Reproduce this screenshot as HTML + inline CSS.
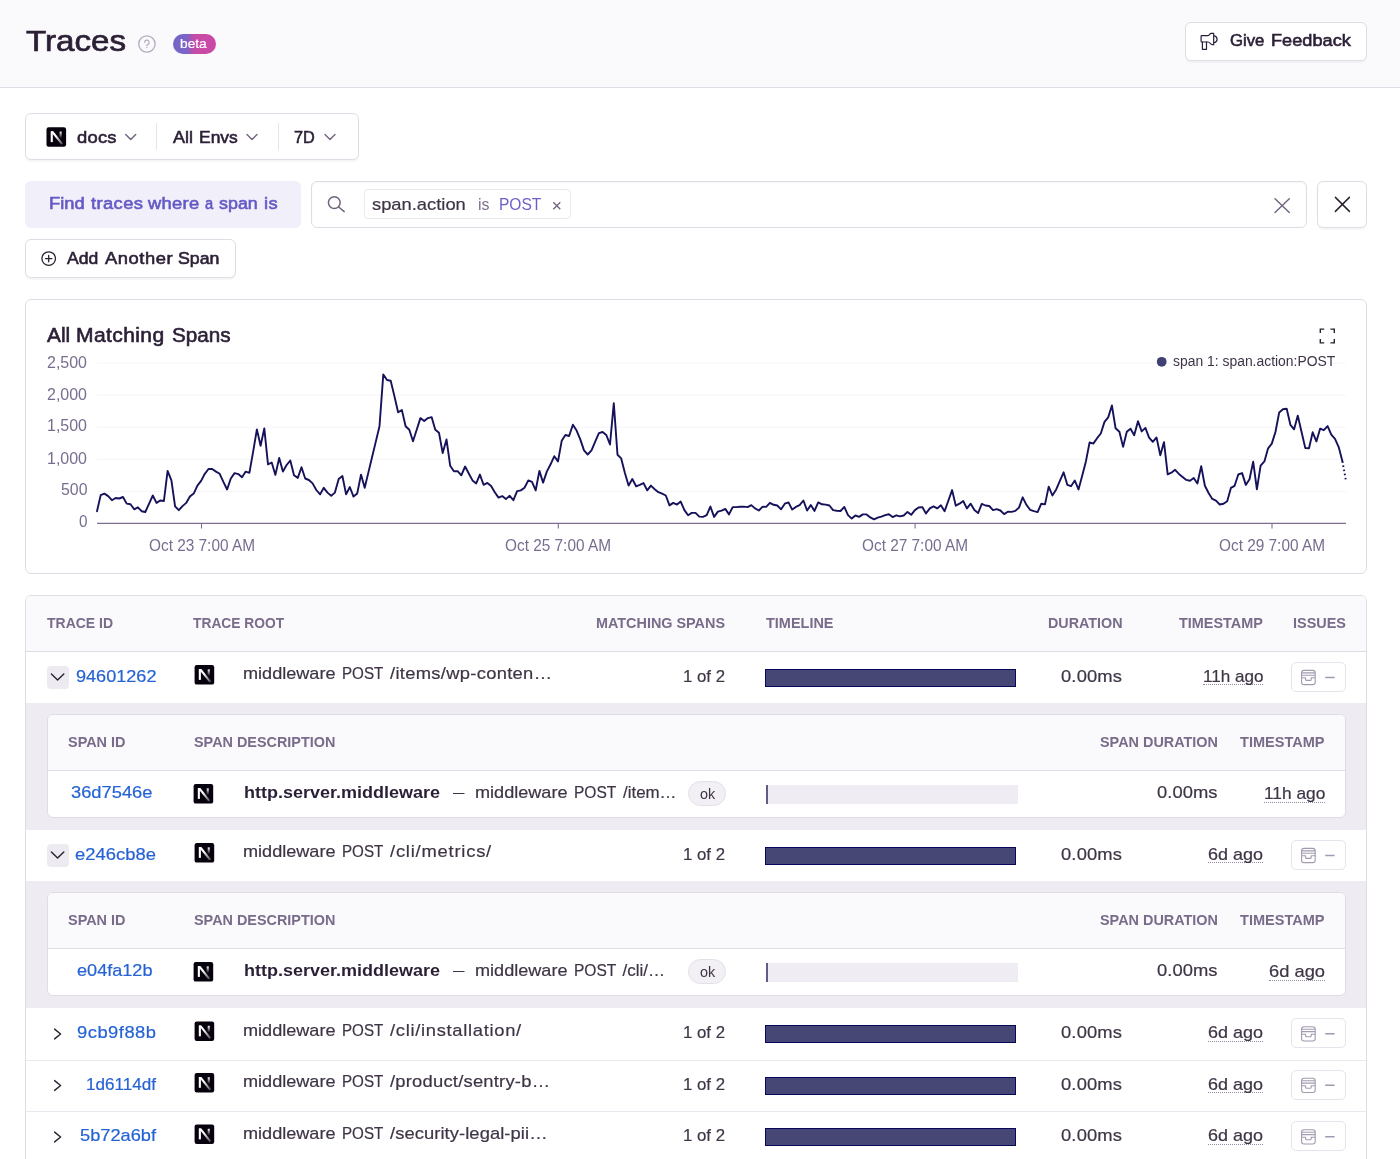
<!DOCTYPE html>
<html lang="en"><head><meta charset="utf-8"><title>Traces</title>
<style>
*{box-sizing:border-box;margin:0;padding:0}
html,body{width:1400px;height:1159px;overflow:hidden;background:#fff;font-family:"Liberation Sans",sans-serif;}
body{position:relative}
.abs{position:absolute}
#texts{position:absolute;left:0;top:0;width:1400px;height:1159px;will-change:transform}
.t{position:absolute;display:inline-block;transform-origin:0 50%;white-space:nowrap;line-height:1;font-family:"Liberation Sans",sans-serif}
.box{position:absolute;border:1px solid #e0dce5;border-radius:6px;background:#fff}
.btn{box-shadow:0 2px 0 rgba(43,34,51,0.04)}
.hdr{position:absolute;left:0;top:0;width:1400px;height:87.5px;background:#faf9fb;border-bottom:1px solid #e0dce5}
.beta{position:absolute;left:173px;top:33.5px;width:42.7px;height:20px;border-radius:10px;background:linear-gradient(90deg,#7565c8 0%,#7a64c7 30%,#c84ba6 52%,#c94aa6 100%)}
.find{position:absolute;left:25px;top:180.5px;width:276px;height:47.5px;border-radius:6px;background:#f0effa}
.divd{position:absolute;width:1px;background:#e7e3ec;top:123px;height:27px}
.token{position:absolute;left:364px;top:189px;width:207px;height:30px;border:1px solid #ece8f0;border-radius:4px;background:#fff}
.thead{position:absolute;background:#faf9fb;border-bottom:1px solid #e0dce5}
.exp{position:absolute;left:26px;width:1340px;background:#eeecf2}
.inner{position:absolute;left:47px;width:1299px;height:104px;border:1px solid #e0dce5;border-radius:6px;background:#fff;overflow:hidden}
.inner .ih{position:absolute;left:0;top:0;width:100%;height:56px;background:#faf9fb;border-bottom:1px solid #e0dce5}
.rowline{position:absolute;left:26px;width:1340px;height:1px;background:#ece8f0}
.chev{position:absolute;width:22px;height:22.5px;border-radius:4px;background:#edeaf1}
.bar{position:absolute;left:765px;width:251px;height:18px;background:#464775;border:1px solid #07075f}
.sbar{position:absolute;left:766px;width:251.5px;height:18.7px;background:#efecf3}
.sbar i{position:absolute;left:0;top:0;width:1.6px;height:100%;background:#625b8a}
.ok{position:absolute;left:687.5px;width:38.5px;height:25px;border-radius:12.5px;background:#f2eff5;border:1px solid #e4e0e9}
.iss{position:absolute;left:1291px;width:55px;height:30px;border:1px solid #e7e3ec;border-radius:5px;background:#fff}
.ul{position:absolute;height:0;border-top:1.2px dotted #968ca6}
svg.ov{position:absolute;left:0;top:0;width:1400px;height:1159px;overflow:visible}

</style></head>
<body>
<div class="hdr"></div>
<div class="beta"></div>
<div class="box btn" style="left:1184.5px;top:21.5px;width:182px;height:39.5px"></div>
<div class="box btn" style="left:25px;top:113px;width:334px;height:47px"></div>
<div class="divd" style="left:156px"></div><div class="divd" style="left:277.5px"></div>
<div class="find"></div>
<div class="box" style="left:311px;top:181px;width:996px;height:47px;box-shadow:inset 0 1px 2px rgba(43,34,51,0.04)"></div>
<div class="token"></div>
<div class="box btn" style="left:1317px;top:181px;width:50px;height:47px"></div>
<div class="box btn" style="left:25px;top:238.5px;width:210.5px;height:39.5px"></div>
<div class="box" style="left:25px;top:298.5px;width:1342px;height:275.5px"></div>
<!-- table -->
<div class="box" style="left:25px;top:594.5px;width:1342px;height:600px;border-radius:6px"></div>
<div class="thead" style="left:26px;top:595.5px;width:1340px;height:56.5px;border-radius:5px 5px 0 0"></div>
<div class="exp" style="top:702.5px;height:127.5px"></div>
<div class="inner" style="top:714px"><div class="ih"></div></div>
<div class="exp" style="top:880.5px;height:127.5px"></div>
<div class="inner" style="top:892px"><div class="ih"></div></div>
<div class="rowline" style="top:1059.5px"></div>
<div class="rowline" style="top:1110.7px"></div>
<div class="chev" style="left:47px;top:666px"></div>
<div class="chev" style="left:47px;top:844px"></div>
<div class="bar" style="top:669px"></div>
<div class="bar" style="top:847px"></div>
<div class="bar" style="top:1025.4px"></div>
<div class="bar" style="top:1077px"></div>
<div class="bar" style="top:1128.4px"></div>
<div class="sbar" style="top:785px"><i></i></div>
<div class="sbar" style="top:963px"><i></i></div>
<div class="ok" style="top:781px"></div>
<div class="ok" style="top:959px"></div>
<div class="iss" style="top:662px"></div>
<div class="iss" style="top:840px"></div>
<div class="iss" style="top:1018.4px"></div>
<div class="iss" style="top:1069.9px"></div>
<div class="iss" style="top:1121.4px"></div>
<div class="ul" style="left:1202.5px;width:60.5px;top:684px"></div>
<div class="ul" style="left:1208px;width:55px;top:862px"></div>
<div class="ul" style="left:1208px;width:55px;top:1040.5px"></div>
<div class="ul" style="left:1208px;width:55px;top:1092px"></div>
<div class="ul" style="left:1208px;width:55px;top:1143.5px"></div>
<div class="ul" style="left:1263.7px;width:61.3px;top:801.5px"></div>
<div class="ul" style="left:1269px;width:56px;top:979.5px"></div>
<svg class="ov" viewBox="0 0 1400 1159">
<defs>
<linearGradient id="ng" x1="0" y1="0" x2="0" y2="1"><stop offset="0" stop-color="#fff"/><stop offset="1" stop-color="#fff" stop-opacity="0"/></linearGradient>
<linearGradient id="ng2" gradientUnits="userSpaceOnUse" x1="9" y1="9" x2="16" y2="17.5"><stop offset="0" stop-color="#fff"/><stop offset="1" stop-color="#fff" stop-opacity="0.25"/></linearGradient>
</defs>
<!-- help icon -->
<circle cx="146.9" cy="44" r="8.2" fill="none" stroke="#b3abbf" stroke-width="1.3"/>
<path d="M144.7 42.3 a2.2 2.2 0 1 1 3.1 2 c-0.7 0.35 -0.9 0.8 -0.9 1.5" fill="none" stroke="#b3abbf" stroke-width="1.2" stroke-linecap="round"/><circle cx="146.9" cy="47.6" r="0.7" fill="#b3abbf"/>
<!-- megaphone -->
<g fill="none" stroke="#2b1d38" stroke-width="1.2" stroke-linejoin="round" stroke-linecap="round">
<path d="M1201.1 36.3 a0.7 0.7 0 0 1 0.7 -0.7 H1207.8 C1209.3 35.6 1209.6 33.4 1211.2 33.4 H1213.7 V44.7 H1212.6 C1210.8 44.7 1209.8 42 1208 42 H1201.8 a0.7 0.7 0 0 1 -0.7 -0.7 Z"/>
<path d="M1202.4 42 V49.3 H1206.5 V42"/>
<path d="M1214.4 35.9 A3.5 3.5 0 0 1 1214.4 42.7"/>
</g>
<!-- platform icon filter -->
<g transform="translate(46.5 127.2)"><rect x="0" y="0" width="19.6" height="19.6" rx="2.2" fill="#07010d"/>
<rect x="4.2" y="4.1" width="2.1" height="10.8" fill="#fff"/>
<path d="M4.2 4.1 L6.8 4.1 L16.5 16.3 L14.8 17.5 L5.8 6.2 Z" fill="url(#ng2)"/>
<rect x="13.1" y="4.4" width="2.1" height="6.6" fill="url(#ng)"/></g>
<g transform="translate(130.7 137)"><path d="M-5 -2.5 L0 2.5 L5 -2.5" fill="none" stroke="#71637e" stroke-width="1.4" stroke-linecap="round" stroke-linejoin="round"/></g><g transform="translate(252 137)"><path d="M-5 -2.5 L0 2.5 L5 -2.5" fill="none" stroke="#71637e" stroke-width="1.4" stroke-linecap="round" stroke-linejoin="round"/></g><g transform="translate(330 137)"><path d="M-5 -2.5 L0 2.5 L5 -2.5" fill="none" stroke="#71637e" stroke-width="1.4" stroke-linecap="round" stroke-linejoin="round"/></g>
<!-- magnifier -->
<g fill="none" stroke="#71637e" stroke-width="1.5" stroke-linecap="round"><circle cx="334.3" cy="202.6" r="5.9"/><path d="M338.7 207 L344.2 211.6"/></g>
<!-- token x -->
<path d="M553.3 202.2 L560.3 209.2 M560.3 202.2 L553.3 209.2" stroke="#71637e" stroke-width="1.3" fill="none"/>
<!-- clear x -->
<path d="M1275 198.8 L1289.3 212.6 M1289.3 198.8 L1275 212.6" stroke="#71637e" stroke-width="1.4" fill="none" stroke-linecap="round"/>
<path d="M1335.4 197.4 L1349.4 211.4 M1349.4 197.4 L1335.4 211.4" stroke="#2b2233" stroke-width="1.5" fill="none" stroke-linecap="round"/>
<!-- add icon -->
<g fill="none" stroke="#2b2233" stroke-width="1.3" stroke-linecap="round"><circle cx="48.7" cy="258.6" r="6.8"/><path d="M45.5 258.6 H51.9 M48.7 255.4 V261.8"/></g>
<!-- chart -->
<g stroke="#f6f4f9" stroke-width="1" fill="none">
<path d="M97 363 H1346 M97 395.1 H1346 M97 427.2 H1346 M97 459.3 H1346 M97 491.4 H1346"/></g>
<path d="M97 523.4 H1346 M201.5 523.4 V528.6 M558.3 523.4 V528.6 M915.1 523.4 V528.6 M1272 523.4 V528.6" stroke="#7d6f91" stroke-width="1.1" fill="none"/>
<path d="M97.0 511.2 L100.7 495.1 L104.4 493.6 L108.2 496.1 L111.9 500.2 L115.6 498.0 L119.3 498.5 L123.0 497.0 L126.7 503.6 L130.5 504.3 L134.2 509.3 L137.9 507.3 L141.6 511.2 L145.3 512.0 L149.0 503.9 L152.8 495.5 L156.5 502.9 L160.2 500.5 L163.9 501.0 L167.6 470.9 L171.4 480.4 L175.1 506.4 L178.8 510.2 L182.5 506.1 L186.2 502.9 L189.9 496.6 L193.7 493.6 L197.4 485.6 L201.1 480.9 L204.8 473.8 L208.5 469.0 L212.2 469.0 L216.0 471.6 L219.7 473.8 L223.4 481.9 L227.1 489.5 L230.8 478.5 L234.6 473.1 L238.3 474.1 L242.0 477.2 L245.7 471.6 L249.4 472.8 L253.1 451.8 L256.9 429.4 L260.6 445.7 L264.3 428.4 L268.0 464.3 L271.7 462.5 L275.4 474.9 L279.2 458.0 L282.9 471.6 L286.6 465.0 L290.3 460.6 L294.0 475.3 L297.8 477.9 L301.5 467.2 L305.2 478.5 L308.9 480.0 L312.6 483.4 L316.3 490.0 L320.1 494.4 L323.8 487.8 L327.5 492.6 L331.2 495.8 L334.9 492.6 L338.7 479.0 L342.4 476.0 L346.1 494.4 L349.8 487.0 L353.5 496.6 L357.2 493.6 L361.0 474.6 L364.7 487.8 L368.4 472.4 L372.1 457.0 L375.8 441.6 L379.5 426.2 L383.3 374.4 L387.0 380.0 L390.7 380.7 L394.4 396.1 L398.1 412.3 L401.9 410.1 L405.6 426.2 L409.3 429.8 L413.0 441.3 L416.7 429.8 L420.4 418.1 L424.2 421.0 L427.9 418.1 L431.6 417.1 L435.3 429.8 L439.0 432.8 L442.7 453.0 L446.5 439.4 L450.2 465.8 L453.9 471.2 L457.6 471.2 L461.3 475.3 L465.1 466.5 L468.8 473.5 L472.5 480.4 L476.2 483.4 L479.9 474.6 L483.6 484.8 L487.4 482.9 L491.1 485.9 L494.8 492.2 L498.5 497.6 L502.2 496.1 L505.9 499.1 L509.7 495.8 L513.4 500.2 L517.1 491.1 L520.8 490.4 L524.5 487.8 L528.3 480.4 L532.0 481.9 L535.7 490.3 L539.4 470.9 L543.1 482.6 L546.8 471.6 L550.6 464.3 L554.3 456.2 L558.0 461.4 L561.7 440.8 L565.4 435.0 L569.1 436.0 L572.9 424.7 L576.6 430.6 L580.3 439.4 L584.0 450.4 L587.7 454.5 L591.5 450.4 L595.2 441.6 L598.9 433.1 L602.6 432.0 L606.3 435.0 L610.0 444.5 L613.8 403.2 L617.5 454.8 L621.2 458.4 L624.9 473.1 L628.6 485.6 L632.3 479.0 L636.1 486.3 L639.8 484.8 L643.5 483.1 L647.2 490.3 L650.9 485.6 L654.7 489.2 L658.4 492.2 L662.1 493.6 L665.8 495.5 L669.5 505.4 L673.2 502.9 L677.0 504.6 L680.7 501.6 L684.4 510.1 L688.1 515.3 L691.8 512.9 L695.5 512.9 L699.3 516.6 L703.0 516.9 L706.7 515.1 L710.4 506.6 L714.1 516.9 L717.9 511.6 L721.6 510.6 L725.3 508.9 L729.0 514.4 L732.7 507.1 L736.4 507.1 L740.2 506.7 L743.9 506.6 L747.6 507.1 L751.3 505.1 L755.0 508.4 L758.8 510.5 L762.5 506.8 L766.2 506.9 L769.9 502.8 L773.6 504.8 L777.3 505.5 L781.1 509.3 L784.8 503.7 L788.5 502.4 L792.2 509.6 L795.9 506.9 L799.6 505.1 L803.4 500.5 L807.1 510.5 L810.8 505.1 L814.5 510.9 L818.2 502.4 L822.0 504.3 L825.7 504.6 L829.4 505.5 L833.1 510.1 L836.8 510.7 L840.5 511.0 L844.3 506.9 L848.0 515.1 L851.7 518.6 L855.4 515.5 L859.1 516.9 L862.8 514.4 L866.6 514.4 L870.3 517.4 L874.0 519.3 L877.7 517.6 L881.4 516.6 L885.2 515.1 L888.9 514.3 L892.6 517.1 L896.3 515.3 L900.0 516.4 L903.7 515.5 L907.5 511.9 L911.2 514.8 L914.9 510.1 L918.6 507.5 L922.3 507.1 L926.0 513.4 L929.8 508.4 L933.5 506.4 L937.2 508.4 L940.9 505.3 L944.6 511.2 L948.4 500.5 L952.1 490.1 L955.8 505.7 L959.5 503.7 L963.2 501.0 L966.9 508.4 L970.7 503.7 L974.4 510.1 L978.1 513.1 L981.8 503.9 L985.5 505.5 L989.2 506.0 L993.0 510.1 L996.7 509.1 L1000.4 510.5 L1004.1 514.1 L1007.8 511.8 L1011.6 511.9 L1015.3 510.9 L1019.0 507.6 L1022.7 497.3 L1026.4 504.8 L1030.1 509.8 L1033.9 511.2 L1037.6 512.1 L1041.3 503.7 L1045.0 504.4 L1048.7 486.6 L1052.4 495.5 L1056.2 489.4 L1059.9 480.9 L1063.6 472.3 L1067.3 484.8 L1071.0 486.2 L1074.8 480.5 L1078.5 489.4 L1082.2 475.7 L1085.9 461.4 L1089.6 442.4 L1093.3 443.6 L1097.1 438.2 L1100.8 433.5 L1104.5 421.9 L1108.2 417.4 L1111.9 405.5 L1115.6 428.3 L1119.4 431.7 L1123.1 446.9 L1126.8 431.7 L1130.5 428.7 L1134.2 435.2 L1138.0 421.2 L1141.7 431.4 L1145.4 427.9 L1149.1 437.6 L1152.8 441.8 L1156.5 437.4 L1160.3 455.2 L1164.0 442.1 L1167.7 474.3 L1171.4 472.7 L1175.1 469.8 L1178.9 473.9 L1182.6 476.9 L1186.3 479.9 L1190.0 480.7 L1193.7 477.9 L1197.4 483.5 L1201.2 466.2 L1204.9 485.8 L1208.6 493.0 L1212.3 498.9 L1216.0 500.7 L1219.7 504.5 L1223.5 503.7 L1227.2 501.3 L1230.9 487.9 L1234.6 485.8 L1238.3 474.5 L1242.1 473.1 L1245.8 484.9 L1249.5 479.3 L1253.2 461.8 L1256.9 489.4 L1260.6 465.6 L1264.4 461.4 L1268.1 448.3 L1271.8 443.6 L1275.5 431.7 L1279.2 412.4 L1282.9 409.3 L1286.7 408.8 L1290.4 424.8 L1294.1 429.3 L1297.8 415.6 L1301.5 431.7 L1305.3 448.1 L1309.0 448.3 L1312.7 432.3 L1316.4 441.4 L1320.1 428.7 L1323.8 430.2 L1327.6 426.1 L1331.3 434.6 L1335.0 438.8 L1338.7 447.1 L1342.4 461.3" fill="none" stroke="#15125a" stroke-width="1.9" stroke-linejoin="round" stroke-linecap="round"/>
<path d="M1342.4 461.3 L1346.1 481.5" fill="none" stroke="#15125a" stroke-width="1.9" stroke-dasharray="1.6 2.6"/>
<circle cx="1161.7" cy="361.8" r="4.9" fill="#3f4074"/>
<path d="M1320.3 333 V329.1 H1324.2 M1330.4 329.1 H1334.3 V333 M1334.3 339 V342.9 H1330.4 M1324.2 342.9 H1320.3 V339" fill="none" stroke="#2b2233" stroke-width="1.4"/>
<!-- table icons -->
<g transform="translate(57.6 677)"><path d="M-6.2 -3.1 L0 3.1 L6.2 -3.1" fill="none" stroke="#2b2233" stroke-width="1.4" stroke-linecap="round" stroke-linejoin="round"/></g><g transform="translate(57.6 855)"><path d="M-6.2 -3.1 L0 3.1 L6.2 -3.1" fill="none" stroke="#2b2233" stroke-width="1.4" stroke-linecap="round" stroke-linejoin="round"/></g>
<g transform="translate(57.6 1034)"><path d="M-3 -4.9 L3 0 L-3 4.9" fill="none" stroke="#2b2233" stroke-width="1.4" stroke-linecap="round" stroke-linejoin="round"/></g><g transform="translate(57.6 1085.5)"><path d="M-3 -4.9 L3 0 L-3 4.9" fill="none" stroke="#2b2233" stroke-width="1.4" stroke-linecap="round" stroke-linejoin="round"/></g><g transform="translate(57.6 1137)"><path d="M-3 -4.9 L3 0 L-3 4.9" fill="none" stroke="#2b2233" stroke-width="1.4" stroke-linecap="round" stroke-linejoin="round"/></g>
<g transform="translate(194.6 665)"><rect x="0" y="0" width="19.6" height="19.6" rx="2.2" fill="#07010d"/>
<rect x="4.2" y="4.1" width="2.1" height="10.8" fill="#fff"/>
<path d="M4.2 4.1 L6.8 4.1 L16.5 16.3 L14.8 17.5 L5.8 6.2 Z" fill="url(#ng2)"/>
<rect x="13.1" y="4.4" width="2.1" height="6.6" fill="url(#ng)"/></g><g transform="translate(194.6 843)"><rect x="0" y="0" width="19.6" height="19.6" rx="2.2" fill="#07010d"/>
<rect x="4.2" y="4.1" width="2.1" height="10.8" fill="#fff"/>
<path d="M4.2 4.1 L6.8 4.1 L16.5 16.3 L14.8 17.5 L5.8 6.2 Z" fill="url(#ng2)"/>
<rect x="13.1" y="4.4" width="2.1" height="6.6" fill="url(#ng)"/></g><g transform="translate(194.6 1021.4)"><rect x="0" y="0" width="19.6" height="19.6" rx="2.2" fill="#07010d"/>
<rect x="4.2" y="4.1" width="2.1" height="10.8" fill="#fff"/>
<path d="M4.2 4.1 L6.8 4.1 L16.5 16.3 L14.8 17.5 L5.8 6.2 Z" fill="url(#ng2)"/>
<rect x="13.1" y="4.4" width="2.1" height="6.6" fill="url(#ng)"/></g><g transform="translate(194.6 1072.9)"><rect x="0" y="0" width="19.6" height="19.6" rx="2.2" fill="#07010d"/>
<rect x="4.2" y="4.1" width="2.1" height="10.8" fill="#fff"/>
<path d="M4.2 4.1 L6.8 4.1 L16.5 16.3 L14.8 17.5 L5.8 6.2 Z" fill="url(#ng2)"/>
<rect x="13.1" y="4.4" width="2.1" height="6.6" fill="url(#ng)"/></g><g transform="translate(194.6 1124.4)"><rect x="0" y="0" width="19.6" height="19.6" rx="2.2" fill="#07010d"/>
<rect x="4.2" y="4.1" width="2.1" height="10.8" fill="#fff"/>
<path d="M4.2 4.1 L6.8 4.1 L16.5 16.3 L14.8 17.5 L5.8 6.2 Z" fill="url(#ng2)"/>
<rect x="13.1" y="4.4" width="2.1" height="6.6" fill="url(#ng)"/></g>
<g transform="translate(193.6 784)"><rect x="0" y="0" width="19.6" height="19.6" rx="2.2" fill="#07010d"/>
<rect x="4.2" y="4.1" width="2.1" height="10.8" fill="#fff"/>
<path d="M4.2 4.1 L6.8 4.1 L16.5 16.3 L14.8 17.5 L5.8 6.2 Z" fill="url(#ng2)"/>
<rect x="13.1" y="4.4" width="2.1" height="6.6" fill="url(#ng)"/></g><g transform="translate(193.6 962)"><rect x="0" y="0" width="19.6" height="19.6" rx="2.2" fill="#07010d"/>
<rect x="4.2" y="4.1" width="2.1" height="10.8" fill="#fff"/>
<path d="M4.2 4.1 L6.8 4.1 L16.5 16.3 L14.8 17.5 L5.8 6.2 Z" fill="url(#ng2)"/>
<rect x="13.1" y="4.4" width="2.1" height="6.6" fill="url(#ng)"/></g>
<g transform="translate(1301 670)" fill="none" stroke="#a29ab0" stroke-width="1.1" stroke-linejoin="round"><rect x="0.6" y="0.4" width="13.6" height="14.2" rx="2.4"/><path d="M0.6 2.9 H14.2 M0.6 5.2 H14.2 M0.6 7.8 H4.6 V9.4 a1 1 0 0 0 1 1 H9.2 a1 1 0 0 0 1 -1 V7.8 H14.2"/></g><g transform="translate(1301 848)" fill="none" stroke="#a29ab0" stroke-width="1.1" stroke-linejoin="round"><rect x="0.6" y="0.4" width="13.6" height="14.2" rx="2.4"/><path d="M0.6 2.9 H14.2 M0.6 5.2 H14.2 M0.6 7.8 H4.6 V9.4 a1 1 0 0 0 1 1 H9.2 a1 1 0 0 0 1 -1 V7.8 H14.2"/></g><g transform="translate(1301 1026.4)" fill="none" stroke="#a29ab0" stroke-width="1.1" stroke-linejoin="round"><rect x="0.6" y="0.4" width="13.6" height="14.2" rx="2.4"/><path d="M0.6 2.9 H14.2 M0.6 5.2 H14.2 M0.6 7.8 H4.6 V9.4 a1 1 0 0 0 1 1 H9.2 a1 1 0 0 0 1 -1 V7.8 H14.2"/></g><g transform="translate(1301 1077.9)" fill="none" stroke="#a29ab0" stroke-width="1.1" stroke-linejoin="round"><rect x="0.6" y="0.4" width="13.6" height="14.2" rx="2.4"/><path d="M0.6 2.9 H14.2 M0.6 5.2 H14.2 M0.6 7.8 H4.6 V9.4 a1 1 0 0 0 1 1 H9.2 a1 1 0 0 0 1 -1 V7.8 H14.2"/></g><g transform="translate(1301 1129.4)" fill="none" stroke="#a29ab0" stroke-width="1.1" stroke-linejoin="round"><rect x="0.6" y="0.4" width="13.6" height="14.2" rx="2.4"/><path d="M0.6 2.9 H14.2 M0.6 5.2 H14.2 M0.6 7.8 H4.6 V9.4 a1 1 0 0 0 1 1 H9.2 a1 1 0 0 0 1 -1 V7.8 H14.2"/></g>
<path d="M1325.2 677.4 H1334.6 M1325.2 855.4 H1334.6 M1325.2 1033.8 H1334.6 M1325.2 1085.3 H1334.6 M1325.2 1136.8 H1334.6" stroke="#a29ab0" stroke-width="1.5" fill="none"/>
</svg>

<div id="texts">
<span class="t" id="t0" style="left:26.20px;top:26.40px;font-size:30px;font-weight:400;color:#2b1f36;letter-spacing:0.000px;transform:scaleX(1.1051);-webkit-text-stroke:0.7px #2b1f36;">Traces</span>
<span class="t" id="t1" style="left:180.40px;top:36.50px;font-size:13px;font-weight:400;color:#fff;letter-spacing:0.000px;transform:scaleX(1.0548);-webkit-text-stroke:0.2px #fff;">beta</span>
<span class="t" id="t2" style="left:1229.50px;top:33.08px;font-size:16.8px;font-weight:400;color:#2b1f36;letter-spacing:0.000px;transform:scaleX(0.9967);-webkit-text-stroke:0.6px #2b1f36;">Give</span>
<span class="t" id="t3" style="left:1270.50px;top:33.08px;font-size:16.8px;font-weight:400;color:#2b1f36;letter-spacing:0.040px;transform:scaleX(1.0800);-webkit-text-stroke:0.6px #2b1f36;">Feedback</span>
<span class="t" id="t4" style="left:77.00px;top:128.61px;font-size:17px;font-weight:400;color:#2b1f36;letter-spacing:0.217px;transform:scaleX(1.0800);-webkit-text-stroke:0.6px #2b1f36;">docs</span>
<span class="t" id="t5" style="left:172.50px;top:128.61px;font-size:17px;font-weight:400;color:#2b1f36;letter-spacing:0.000px;transform:scaleX(1.0579);-webkit-text-stroke:0.6px #2b1f36;">All</span>
<span class="t" id="t6" style="left:199.20px;top:128.61px;font-size:17px;font-weight:400;color:#2b1f36;letter-spacing:0.000px;transform:scaleX(1.0265);-webkit-text-stroke:0.6px #2b1f36;">Envs</span>
<span class="t" id="t7" style="left:293.70px;top:128.61px;font-size:17px;font-weight:400;color:#2b1f36;letter-spacing:0.000px;transform:scaleX(0.9570);-webkit-text-stroke:0.6px #2b1f36;">7D</span>
<span class="t" id="t8" style="left:48.70px;top:195.11px;font-size:17px;font-weight:400;color:#6559c5;letter-spacing:0.023px;transform:scaleX(1.0800);-webkit-text-stroke:0.6px #6559c5;">Find</span>
<span class="t" id="t9" style="left:90.50px;top:195.11px;font-size:17px;font-weight:400;color:#6559c5;letter-spacing:0.370px;transform:scaleX(1.0800);-webkit-text-stroke:0.6px #6559c5;">traces</span>
<span class="t" id="t10" style="left:148.00px;top:195.11px;font-size:17px;font-weight:400;color:#6559c5;letter-spacing:0.274px;transform:scaleX(1.0800);-webkit-text-stroke:0.6px #6559c5;">where</span>
<span class="t" id="t11" style="left:205.00px;top:195.11px;font-size:17px;font-weight:400;color:#6559c5;letter-spacing:0.000px;transform:scaleX(0.8660);-webkit-text-stroke:0.6px #6559c5;">a</span>
<span class="t" id="t12" style="left:218.70px;top:195.11px;font-size:17px;font-weight:400;color:#6559c5;letter-spacing:0.000px;transform:scaleX(1.0522);-webkit-text-stroke:0.6px #6559c5;">span</span>
<span class="t" id="t13" style="left:263.70px;top:195.11px;font-size:17px;font-weight:400;color:#6559c5;letter-spacing:0.497px;transform:scaleX(1.0800);-webkit-text-stroke:0.6px #6559c5;">is</span>
<span class="t" id="t14" style="left:371.70px;top:195.61px;font-size:17px;font-weight:400;color:#3e3446;letter-spacing:0.000px;transform:scaleX(1.0787);-webkit-text-stroke:0.2px #3e3446;">span.action</span>
<span class="t" id="t15" style="left:477.50px;top:195.61px;font-size:17px;font-weight:400;color:#80708f;letter-spacing:0.000px;transform:scaleX(0.9364);">is</span>
<span class="t" id="t16" style="left:498.70px;top:195.61px;font-size:17px;font-weight:400;color:#6c5fc7;letter-spacing:0.000px;transform:scaleX(0.9137);">POST</span>
<span class="t" id="t17" style="left:67.00px;top:250.11px;font-size:17px;font-weight:400;color:#2b1f36;letter-spacing:-0.000px;transform:scaleX(1.0314);-webkit-text-stroke:0.6px #2b1f36;">Add</span>
<span class="t" id="t18" style="left:104.50px;top:250.11px;font-size:17px;font-weight:400;color:#2b1f36;letter-spacing:0.492px;transform:scaleX(1.0800);-webkit-text-stroke:0.6px #2b1f36;">Another</span>
<span class="t" id="t19" style="left:178.00px;top:250.11px;font-size:17px;font-weight:400;color:#2b1f36;letter-spacing:0.000px;transform:scaleX(1.0453);-webkit-text-stroke:0.6px #2b1f36;">Span</span>
<span class="t" id="t20" style="left:46.80px;top:325.79px;font-size:19.5px;font-weight:400;color:#2b1f36;letter-spacing:0.000px;transform:scaleX(1.0705);-webkit-text-stroke:0.6px #2b1f36;">All</span>
<span class="t" id="t21" style="left:76.20px;top:325.79px;font-size:19.5px;font-weight:400;color:#2b1f36;letter-spacing:0.350px;transform:scaleX(1.0800);-webkit-text-stroke:0.6px #2b1f36;">Matching</span>
<span class="t" id="t22" style="left:171.80px;top:325.79px;font-size:19.5px;font-weight:400;color:#2b1f36;letter-spacing:-0.000px;transform:scaleX(1.0597);-webkit-text-stroke:0.6px #2b1f36;">Spans</span>
<span class="t" id="t23" style="left:47.00px;top:354.59px;font-size:15.6px;font-weight:400;color:#786d8f;letter-spacing:0.000px;transform:scaleX(1.0248);">2,500</span>
<span class="t" id="t24" style="left:47.00px;top:386.69px;font-size:15.6px;font-weight:400;color:#786d8f;letter-spacing:0.000px;transform:scaleX(1.0248);">2,000</span>
<span class="t" id="t25" style="left:47.00px;top:418.49px;font-size:15.6px;font-weight:400;color:#786d8f;letter-spacing:0.000px;transform:scaleX(1.0248);">1,500</span>
<span class="t" id="t26" style="left:47.00px;top:450.69px;font-size:15.6px;font-weight:400;color:#786d8f;letter-spacing:0.000px;transform:scaleX(1.0248);">1,000</span>
<span class="t" id="t27" style="left:60.50px;top:482.09px;font-size:15.6px;font-weight:400;color:#786d8f;letter-spacing:0.000px;transform:scaleX(1.0180);">500</span>
<span class="t" id="t28" style="left:78.50px;top:513.89px;font-size:15.6px;font-weight:400;color:#786d8f;letter-spacing:0.000px;transform:scaleX(0.9784);">0</span>
<span class="t" id="t29" style="left:148.50px;top:536.72px;font-size:16.4px;font-weight:400;color:#786d8f;letter-spacing:0.000px;transform:scaleX(0.9382);">Oct 23 7:00 AM</span>
<span class="t" id="t30" style="left:505.30px;top:536.72px;font-size:16.4px;font-weight:400;color:#786d8f;letter-spacing:0.000px;transform:scaleX(0.9382);">Oct 25 7:00 AM</span>
<span class="t" id="t31" style="left:862.10px;top:536.72px;font-size:16.4px;font-weight:400;color:#786d8f;letter-spacing:0.000px;transform:scaleX(0.9382);">Oct 27 7:00 AM</span>
<span class="t" id="t32" style="left:1219.00px;top:536.72px;font-size:16.4px;font-weight:400;color:#786d8f;letter-spacing:0.000px;transform:scaleX(0.9382);">Oct 29 7:00 AM</span>
<span class="t" id="t33" style="left:1173.40px;top:354.62px;font-size:13.8px;font-weight:400;color:#3e3446;letter-spacing:0.000px;transform:scaleX(1.0077);">span 1: span.action:POST</span>
<span class="t" id="t34" style="left:47.00px;top:614.58px;font-size:15.5px;font-weight:700;color:#796b8a;letter-spacing:0.000px;transform:scaleX(0.9016);">TRACE ID</span>
<span class="t" id="t35" style="left:192.50px;top:614.58px;font-size:15.5px;font-weight:700;color:#796b8a;letter-spacing:0.000px;transform:scaleX(0.8900);">TRACE ROOT</span>
<span class="t" id="t36" style="left:595.50px;top:614.58px;font-size:15.5px;font-weight:700;color:#796b8a;letter-spacing:0.000px;transform:scaleX(0.9285);">MATCHING SPANS</span>
<span class="t" id="t37" style="left:765.50px;top:614.58px;font-size:15.5px;font-weight:700;color:#796b8a;letter-spacing:0.000px;transform:scaleX(0.9330);">TIMELINE</span>
<span class="t" id="t38" style="left:1047.50px;top:614.58px;font-size:15.5px;font-weight:700;color:#796b8a;letter-spacing:0.000px;transform:scaleX(0.9237);">DURATION</span>
<span class="t" id="t39" style="left:1178.70px;top:614.58px;font-size:15.5px;font-weight:700;color:#796b8a;letter-spacing:0.000px;transform:scaleX(0.9298);">TIMESTAMP</span>
<span class="t" id="t40" style="left:1292.50px;top:614.58px;font-size:15.5px;font-weight:700;color:#796b8a;letter-spacing:0.000px;transform:scaleX(0.9321);">ISSUES</span>
<span class="t" id="t41" style="left:75.50px;top:667.61px;font-size:17px;font-weight:400;color:#2562d4;letter-spacing:0.000px;transform:scaleX(1.0642);-webkit-text-stroke:0.2px #2562d4;">94601262</span>
<span class="t" id="t42" style="left:242.50px;top:665.11px;font-size:17px;font-weight:400;color:#3e3446;letter-spacing:0.000px;transform:scaleX(1.0640);-webkit-text-stroke:0.2px #3e3446;">middleware</span>
<span class="t" id="t43" style="left:341.70px;top:665.11px;font-size:17px;font-weight:400;color:#3e3446;letter-spacing:0.000px;transform:scaleX(0.8921);-webkit-text-stroke:0.2px #3e3446;">POST</span>
<span class="t" id="t44" style="left:390.00px;top:665.11px;font-size:17px;font-weight:400;color:#3e3446;letter-spacing:0.281px;transform:scaleX(1.0800);-webkit-text-stroke:0.2px #3e3446;">/items/wp-conten…</span>
<span class="t" id="t45" style="left:682.50px;top:667.61px;font-size:17px;font-weight:400;color:#3e3446;letter-spacing:0.000px;transform:scaleX(0.9871);-webkit-text-stroke:0.2px #3e3446;">1 of 2</span>
<span class="t" id="t46" style="left:1061.00px;top:667.61px;font-size:17px;font-weight:400;color:#3e3446;letter-spacing:0.146px;transform:scaleX(1.0800);-webkit-text-stroke:0.2px #3e3446;">0.00ms</span>
<span class="t" id="t47" style="left:1202.50px;top:667.61px;font-size:17px;font-weight:400;color:#3e3446;letter-spacing:0.000px;transform:scaleX(1.0049);-webkit-text-stroke:0.2px #3e3446;">11h ago</span>
<span class="t" id="t48" style="left:75.00px;top:845.61px;font-size:17px;font-weight:400;color:#2562d4;letter-spacing:0.045px;transform:scaleX(1.0800);-webkit-text-stroke:0.2px #2562d4;">e246cb8e</span>
<span class="t" id="t49" style="left:242.50px;top:843.11px;font-size:17px;font-weight:400;color:#3e3446;letter-spacing:0.000px;transform:scaleX(1.0640);-webkit-text-stroke:0.2px #3e3446;">middleware</span>
<span class="t" id="t50" style="left:341.70px;top:843.11px;font-size:17px;font-weight:400;color:#3e3446;letter-spacing:0.000px;transform:scaleX(0.8921);-webkit-text-stroke:0.2px #3e3446;">POST</span>
<span class="t" id="t51" style="left:390.00px;top:843.11px;font-size:17px;font-weight:400;color:#3e3446;letter-spacing:0.725px;transform:scaleX(1.0800);-webkit-text-stroke:0.2px #3e3446;">/cli/metrics/</span>
<span class="t" id="t52" style="left:682.50px;top:845.61px;font-size:17px;font-weight:400;color:#3e3446;letter-spacing:0.000px;transform:scaleX(0.9871);-webkit-text-stroke:0.2px #3e3446;">1 of 2</span>
<span class="t" id="t53" style="left:1061.00px;top:845.61px;font-size:17px;font-weight:400;color:#3e3446;letter-spacing:0.146px;transform:scaleX(1.0800);-webkit-text-stroke:0.2px #3e3446;">0.00ms</span>
<span class="t" id="t54" style="left:1208.00px;top:845.61px;font-size:17px;font-weight:400;color:#3e3446;letter-spacing:0.000px;transform:scaleX(1.0577);-webkit-text-stroke:0.2px #3e3446;">6d ago</span>
<span class="t" id="t55" style="left:77.00px;top:1024.11px;font-size:17px;font-weight:400;color:#2562d4;letter-spacing:0.456px;transform:scaleX(1.0800);-webkit-text-stroke:0.2px #2562d4;">9cb9f88b</span>
<span class="t" id="t56" style="left:242.50px;top:1021.61px;font-size:17px;font-weight:400;color:#3e3446;letter-spacing:0.000px;transform:scaleX(1.0640);-webkit-text-stroke:0.2px #3e3446;">middleware</span>
<span class="t" id="t57" style="left:341.70px;top:1021.61px;font-size:17px;font-weight:400;color:#3e3446;letter-spacing:0.000px;transform:scaleX(0.8921);-webkit-text-stroke:0.2px #3e3446;">POST</span>
<span class="t" id="t58" style="left:390.00px;top:1021.61px;font-size:17px;font-weight:400;color:#3e3446;letter-spacing:0.642px;transform:scaleX(1.0800);-webkit-text-stroke:0.2px #3e3446;">/cli/installation/</span>
<span class="t" id="t59" style="left:682.50px;top:1024.11px;font-size:17px;font-weight:400;color:#3e3446;letter-spacing:0.000px;transform:scaleX(0.9871);-webkit-text-stroke:0.2px #3e3446;">1 of 2</span>
<span class="t" id="t60" style="left:1061.00px;top:1024.11px;font-size:17px;font-weight:400;color:#3e3446;letter-spacing:0.146px;transform:scaleX(1.0800);-webkit-text-stroke:0.2px #3e3446;">0.00ms</span>
<span class="t" id="t61" style="left:1208.00px;top:1024.11px;font-size:17px;font-weight:400;color:#3e3446;letter-spacing:0.000px;transform:scaleX(1.0577);-webkit-text-stroke:0.2px #3e3446;">6d ago</span>
<span class="t" id="t62" style="left:86.00px;top:1075.61px;font-size:17px;font-weight:400;color:#2562d4;letter-spacing:0.000px;transform:scaleX(1.0049);-webkit-text-stroke:0.2px #2562d4;">1d6114df</span>
<span class="t" id="t63" style="left:242.50px;top:1073.11px;font-size:17px;font-weight:400;color:#3e3446;letter-spacing:0.000px;transform:scaleX(1.0640);-webkit-text-stroke:0.2px #3e3446;">middleware</span>
<span class="t" id="t64" style="left:341.70px;top:1073.11px;font-size:17px;font-weight:400;color:#3e3446;letter-spacing:0.000px;transform:scaleX(0.8921);-webkit-text-stroke:0.2px #3e3446;">POST</span>
<span class="t" id="t65" style="left:390.00px;top:1073.11px;font-size:17px;font-weight:400;color:#3e3446;letter-spacing:0.211px;transform:scaleX(1.0800);-webkit-text-stroke:0.2px #3e3446;">/product/sentry-b…</span>
<span class="t" id="t66" style="left:682.50px;top:1075.61px;font-size:17px;font-weight:400;color:#3e3446;letter-spacing:0.000px;transform:scaleX(0.9871);-webkit-text-stroke:0.2px #3e3446;">1 of 2</span>
<span class="t" id="t67" style="left:1061.00px;top:1075.61px;font-size:17px;font-weight:400;color:#3e3446;letter-spacing:0.146px;transform:scaleX(1.0800);-webkit-text-stroke:0.2px #3e3446;">0.00ms</span>
<span class="t" id="t68" style="left:1208.00px;top:1075.61px;font-size:17px;font-weight:400;color:#3e3446;letter-spacing:0.000px;transform:scaleX(1.0577);-webkit-text-stroke:0.2px #3e3446;">6d ago</span>
<span class="t" id="t69" style="left:80.00px;top:1127.11px;font-size:17px;font-weight:400;color:#2562d4;letter-spacing:0.000px;transform:scaleX(1.0718);-webkit-text-stroke:0.2px #2562d4;">5b72a6bf</span>
<span class="t" id="t70" style="left:242.50px;top:1124.61px;font-size:17px;font-weight:400;color:#3e3446;letter-spacing:0.000px;transform:scaleX(1.0640);-webkit-text-stroke:0.2px #3e3446;">middleware</span>
<span class="t" id="t71" style="left:341.70px;top:1124.61px;font-size:17px;font-weight:400;color:#3e3446;letter-spacing:0.000px;transform:scaleX(0.8921);-webkit-text-stroke:0.2px #3e3446;">POST</span>
<span class="t" id="t72" style="left:390.00px;top:1124.61px;font-size:17px;font-weight:400;color:#3e3446;letter-spacing:0.068px;transform:scaleX(1.0800);-webkit-text-stroke:0.2px #3e3446;">/security-legal-pii…</span>
<span class="t" id="t73" style="left:682.50px;top:1127.11px;font-size:17px;font-weight:400;color:#3e3446;letter-spacing:0.000px;transform:scaleX(0.9871);-webkit-text-stroke:0.2px #3e3446;">1 of 2</span>
<span class="t" id="t74" style="left:1061.00px;top:1127.11px;font-size:17px;font-weight:400;color:#3e3446;letter-spacing:0.146px;transform:scaleX(1.0800);-webkit-text-stroke:0.2px #3e3446;">0.00ms</span>
<span class="t" id="t75" style="left:1208.00px;top:1127.11px;font-size:17px;font-weight:400;color:#3e3446;letter-spacing:0.000px;transform:scaleX(1.0577);-webkit-text-stroke:0.2px #3e3446;">6d ago</span>
<span class="t" id="t76" style="left:68.00px;top:734.38px;font-size:15.5px;font-weight:700;color:#796b8a;letter-spacing:0.000px;transform:scaleX(0.9314);">SPAN ID</span>
<span class="t" id="t77" style="left:193.70px;top:734.38px;font-size:15.5px;font-weight:700;color:#796b8a;letter-spacing:0.000px;transform:scaleX(0.9287);">SPAN DESCRIPTION</span>
<span class="t" id="t78" style="left:1099.50px;top:734.38px;font-size:15.5px;font-weight:700;color:#796b8a;letter-spacing:0.000px;transform:scaleX(0.9300);">SPAN DURATION</span>
<span class="t" id="t79" style="left:1240.00px;top:734.38px;font-size:15.5px;font-weight:700;color:#796b8a;letter-spacing:0.000px;transform:scaleX(0.9376);">TIMESTAMP</span>
<span class="t" id="t80" style="left:71.00px;top:784.31px;font-size:17px;font-weight:400;color:#2562d4;letter-spacing:0.000px;transform:scaleX(1.0775);-webkit-text-stroke:0.2px #2562d4;">36d7546e</span>
<span class="t" id="t81" style="left:244.00px;top:784.31px;font-size:17px;font-weight:700;color:#2b1f36;letter-spacing:0.000px;transform:scaleX(1.0584);">http.server.middleware</span>
<span class="t" id="t82" style="left:453.00px;top:784.85px;font-size:14px;font-weight:400;color:#3e3446;letter-spacing:0.000px;transform:scaleX(0.8214);">—</span>
<span class="t" id="t83" style="left:475.00px;top:784.31px;font-size:17px;font-weight:400;color:#3e3446;letter-spacing:0.000px;transform:scaleX(1.0640);-webkit-text-stroke:0.2px #3e3446;">middleware</span>
<span class="t" id="t84" style="left:573.70px;top:784.31px;font-size:17px;font-weight:400;color:#3e3446;letter-spacing:0.000px;transform:scaleX(0.9137);-webkit-text-stroke:0.2px #3e3446;">POST</span>
<span class="t" id="t85" style="left:622.50px;top:784.31px;font-size:17px;font-weight:400;color:#3e3446;letter-spacing:0.000px;transform:scaleX(0.9936);-webkit-text-stroke:0.2px #3e3446;">/item…</span>
<span class="t" id="t86" style="left:699.80px;top:787.35px;font-size:14px;font-weight:400;color:#3e3446;letter-spacing:0.000px;transform:scaleX(1.0272);">ok</span>
<span class="t" id="t87" style="left:1157.00px;top:784.31px;font-size:17px;font-weight:400;color:#3e3446;letter-spacing:0.054px;transform:scaleX(1.0800);-webkit-text-stroke:0.2px #3e3446;">0.00ms</span>
<span class="t" id="t88" style="left:1263.70px;top:785.31px;font-size:17px;font-weight:400;color:#3e3446;letter-spacing:-0.000px;transform:scaleX(1.0182);-webkit-text-stroke:0.2px #3e3446;">11h ago</span>
<span class="t" id="t89" style="left:68.00px;top:912.38px;font-size:15.5px;font-weight:700;color:#796b8a;letter-spacing:0.000px;transform:scaleX(0.9314);">SPAN ID</span>
<span class="t" id="t90" style="left:193.70px;top:912.38px;font-size:15.5px;font-weight:700;color:#796b8a;letter-spacing:0.000px;transform:scaleX(0.9287);">SPAN DESCRIPTION</span>
<span class="t" id="t91" style="left:1099.50px;top:912.38px;font-size:15.5px;font-weight:700;color:#796b8a;letter-spacing:0.000px;transform:scaleX(0.9300);">SPAN DURATION</span>
<span class="t" id="t92" style="left:1240.00px;top:912.38px;font-size:15.5px;font-weight:700;color:#796b8a;letter-spacing:0.000px;transform:scaleX(0.9376);">TIMESTAMP</span>
<span class="t" id="t93" style="left:77.00px;top:962.31px;font-size:17px;font-weight:400;color:#2562d4;letter-spacing:0.000px;transform:scaleX(1.0648);-webkit-text-stroke:0.2px #2562d4;">e04fa12b</span>
<span class="t" id="t94" style="left:244.00px;top:962.31px;font-size:17px;font-weight:700;color:#2b1f36;letter-spacing:0.000px;transform:scaleX(1.0584);">http.server.middleware</span>
<span class="t" id="t95" style="left:453.00px;top:962.85px;font-size:14px;font-weight:400;color:#3e3446;letter-spacing:0.000px;transform:scaleX(0.8214);">—</span>
<span class="t" id="t96" style="left:475.00px;top:962.31px;font-size:17px;font-weight:400;color:#3e3446;letter-spacing:0.000px;transform:scaleX(1.0640);-webkit-text-stroke:0.2px #3e3446;">middleware</span>
<span class="t" id="t97" style="left:573.70px;top:962.31px;font-size:17px;font-weight:400;color:#3e3446;letter-spacing:0.000px;transform:scaleX(0.9137);-webkit-text-stroke:0.2px #3e3446;">POST</span>
<span class="t" id="t98" style="left:622.50px;top:962.31px;font-size:17px;font-weight:400;color:#3e3446;letter-spacing:0.000px;-webkit-text-stroke:0.2px #3e3446;">/cli/…</span>
<span class="t" id="t99" style="left:699.80px;top:965.35px;font-size:14px;font-weight:400;color:#3e3446;letter-spacing:0.000px;transform:scaleX(1.0272);">ok</span>
<span class="t" id="t100" style="left:1157.00px;top:962.31px;font-size:17px;font-weight:400;color:#3e3446;letter-spacing:0.054px;transform:scaleX(1.0800);-webkit-text-stroke:0.2px #3e3446;">0.00ms</span>
<span class="t" id="t101" style="left:1269.00px;top:963.31px;font-size:17px;font-weight:400;color:#3e3446;letter-spacing:0.000px;transform:scaleX(1.0769);-webkit-text-stroke:0.2px #3e3446;">6d ago</span>
</div>
</body></html>
